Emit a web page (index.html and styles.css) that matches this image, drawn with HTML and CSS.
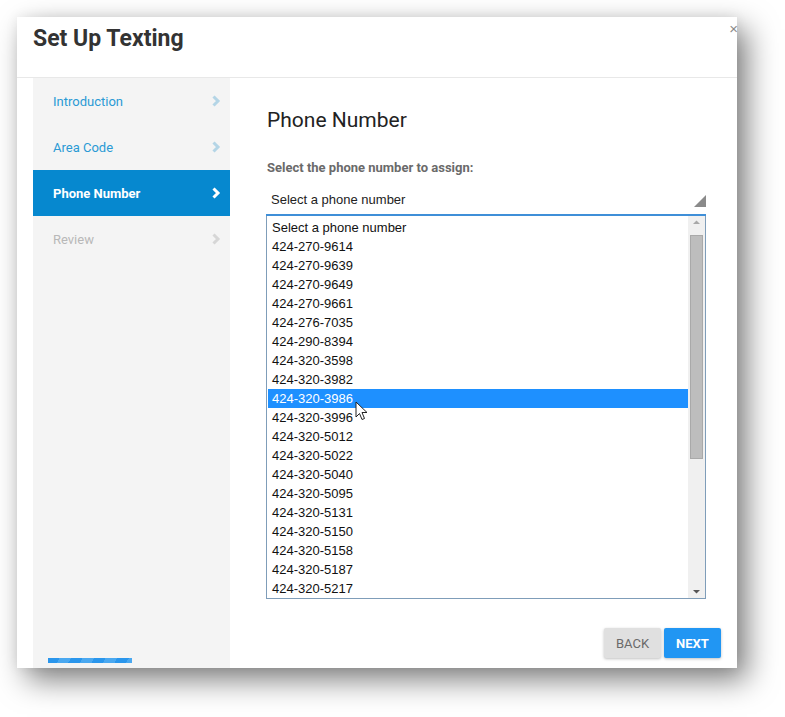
FILE: index.html
```
<!DOCTYPE html>
<html>
<head>
<meta charset="utf-8">
<link rel="stylesheet" href="styles.css">
</head>
<body>
<div class="dialog">
  <span class="close">×</span>
  <div class="header"><h1 class="title">Set Up Texting</h1></div>
  <div class="main">
    <nav class="sidebar">
      <div class="step done"><span>Introduction</span><svg class="chev" width="10" height="12" viewBox="0 0 10 12"><polyline points="2.5,1.5 7,6 2.5,10.5" fill="none" stroke="currentColor" stroke-width="3"/></svg></div>
      <div class="step done"><span>Area Code</span><svg class="chev" width="10" height="12" viewBox="0 0 10 12"><polyline points="2.5,1.5 7,6 2.5,10.5" fill="none" stroke="currentColor" stroke-width="3"/></svg></div>
      <div class="step active"><span>Phone Number</span><svg class="chev" width="10" height="12" viewBox="0 0 10 12"><polyline points="2.5,1.5 7,6 2.5,10.5" fill="none" stroke="currentColor" stroke-width="3"/></svg></div>
      <div class="step todo"><span>Review</span><svg class="chev" width="10" height="12" viewBox="0 0 10 12"><polyline points="2.5,1.5 7,6 2.5,10.5" fill="none" stroke="currentColor" stroke-width="3"/></svg></div>
      <div class="progress"></div>
    </nav>
    <section class="content">
      <h2 class="heading">Phone Number</h2>
      <div class="label">Select the phone number to assign:</div>
      <div class="select">
        <span>Select a phone number</span>
        <svg class="corner" width="12" height="12" viewBox="0 0 12 12"><polygon points="12,0 12,12 0,12" fill="#8a8a8a"/></svg>
      </div>
      <div class="listbox">
        <div class="options">
          <div class="opt">Select a phone number</div>
          <div class="opt">424-270-9614</div>
          <div class="opt">424-270-9639</div>
          <div class="opt">424-270-9649</div>
          <div class="opt">424-270-9661</div>
          <div class="opt">424-276-7035</div>
          <div class="opt">424-290-8394</div>
          <div class="opt">424-320-3598</div>
          <div class="opt">424-320-3982</div>
          <div class="opt selected">424-320-3986</div>
          <div class="opt">424-320-3996</div>
          <div class="opt">424-320-5012</div>
          <div class="opt">424-320-5022</div>
          <div class="opt">424-320-5040</div>
          <div class="opt">424-320-5095</div>
          <div class="opt">424-320-5131</div>
          <div class="opt">424-320-5150</div>
          <div class="opt">424-320-5158</div>
          <div class="opt">424-320-5187</div>
          <div class="opt">424-320-5217</div>
        </div>
        <div class="scrollbar">
          <svg class="arrow" width="17" height="12" viewBox="0 0 17 12"><polygon points="5,8 12,8 8.5,4.5" fill="#a8a8a8"/></svg>
          <div class="track"><div class="thumb"></div></div>
          <svg class="arrow" width="17" height="12" viewBox="0 0 17 12"><polygon points="5,4 12,4 8.5,7.5" fill="#555"/></svg>
        </div>
        <svg class="cursor" width="14" height="20" viewBox="0 0 14 20"><path d="M1 1 L1 16 L4.5 12.5 L7 18.5 L9.5 17.5 L7 11.5 L12 11.5 Z" fill="#fff" stroke="#222" stroke-width="1" stroke-linejoin="round"/></svg>
      </div>
      <div class="actions">
        <button class="btn back">BACK</button>
        <button class="btn next">NEXT</button>
      </div>
    </section>
  </div>
</div>
</body>
</html>
```
FILE: styles.css
```
html, body {
  margin: 0;
  padding: 0;
  background: #ffffff;
}
body {
  padding: 17px 0 0 17px;
  min-height: 717px;
  box-sizing: border-box;
  font-family: Roboto, "Liberation Sans", sans-serif;
}
.dialog {
  position: relative;
  width: 720px;
  height: 651px;
  background: #fff;
  display: flex;
  flex-direction: column;
  box-shadow: 10px 12px 28px rgba(0,0,0,0.5), 0 0 12px rgba(0,0,0,0.07);
}
.close {
  position: absolute;
  top: 3px;
  right: -1px;
  font-size: 15px;
  color: #8a8a8a;
  font-family: "Liberation Sans", sans-serif;
}
.header {
  height: 61px;
  border-bottom: 1px solid #e8e8e8;
  padding-left: 16px;
  box-sizing: border-box;
}
.title {
  margin: 0;
  padding-top: 8px;
  font-size: 23px;
  font-weight: 700;
  color: #333;
  line-height: 28px;
}
.main {
  flex: 1;
  display: flex;
  padding-left: 16px;
}
.sidebar {
  width: 197px;
  background: #f4f4f4;
  display: flex;
  flex-direction: column;
}
.step {
  height: 46px;
  display: flex;
  align-items: center;
  justify-content: space-between;
  padding: 0 9px 0 20px;
  font-size: 13px;
}
.step.done { color: #2a9ad4; }
.step.done .chev { color: #b4d5e6; }
.step.active {
  background: #0688cf;
  color: #fff;
  font-weight: 700;
}
.step.active .chev { color: #fff; }
.step.todo { color: #b8b8b8; }
.step.todo .chev { color: #d6d6d6; }
.progress {
  margin-top: auto;
  margin-left: 15px;
  margin-bottom: 5px;
  width: 84px;
  height: 5px;
  background: repeating-linear-gradient(120deg, #2a96ec 0 10px, #4aa8f0 10px 20px);
}
.content {
  flex: 1;
  display: flex;
  flex-direction: column;
  padding: 0 31px 0 36px;
}
.heading {
  margin: 29px 0 0 1px;
  font-size: 21px;
  font-weight: 400;
  color: #222;
  line-height: 26px;
}
.label {
  margin: 27px 0 0 1px;
  font-size: 13px;
  font-weight: 700;
  color: #6a6a6a;
  line-height: 16px;
}
.select {
  margin-top: 9px;
  height: 29px;
  display: flex;
  align-items: center;
  justify-content: space-between;
  padding: 0 0 0 5px;
  border-bottom: 2px solid #3f8fd8;
  font-family: "Liberation Sans", sans-serif;
  font-size: 13px;
  color: #222;
}
.corner { align-self: flex-end; margin-bottom: 7px; }
.listbox {
  position: relative;
  height: 382px;
  border: 1px solid #7f9db9;
  border-top: none;
  display: flex;
  font-family: "Liberation Sans", sans-serif;
  font-size: 13px;
  color: #111;
}
.options {
  flex: 1;
  padding: 2px 0 0 1px;
}
.opt {
  height: 19px;
  line-height: 19px;
  padding-left: 4px;
}
.opt.selected {
  background: #1e90ff;
  color: #fff;
}
.scrollbar {
  width: 17px;
  background: #f0f0f0;
  display: flex;
  flex-direction: column;
}
.arrow { display: block; flex: none; }
.track {
  flex: 1;
  padding: 7px 2px 0 2px;
}
.thumb {
  height: 224px;
  background: #bdbdbd;
  border: 1px solid #a9a9a9;
  box-sizing: border-box;
}
.cursor {
  position: absolute;
  left: 88px;
  top: 185px;
}
.actions {
  margin-top: auto;
  margin-bottom: 10px;
  margin-right: -15px;
  display: flex;
  justify-content: flex-end;
  gap: 3px;
}
.btn {
  width: 57px;
  height: 30px;
  border: none;
  border-radius: 2px;
  font-family: Roboto, sans-serif;
  font-size: 13px;
  box-shadow: 0 1px 3px rgba(0,0,0,0.25);
  padding: 0;
}
.btn.back {
  background: #e0e0e0;
  color: #6a6a6a;
}
.btn.next {
  background: #2196f3;
  color: #fff;
  font-weight: 700;
}
```
